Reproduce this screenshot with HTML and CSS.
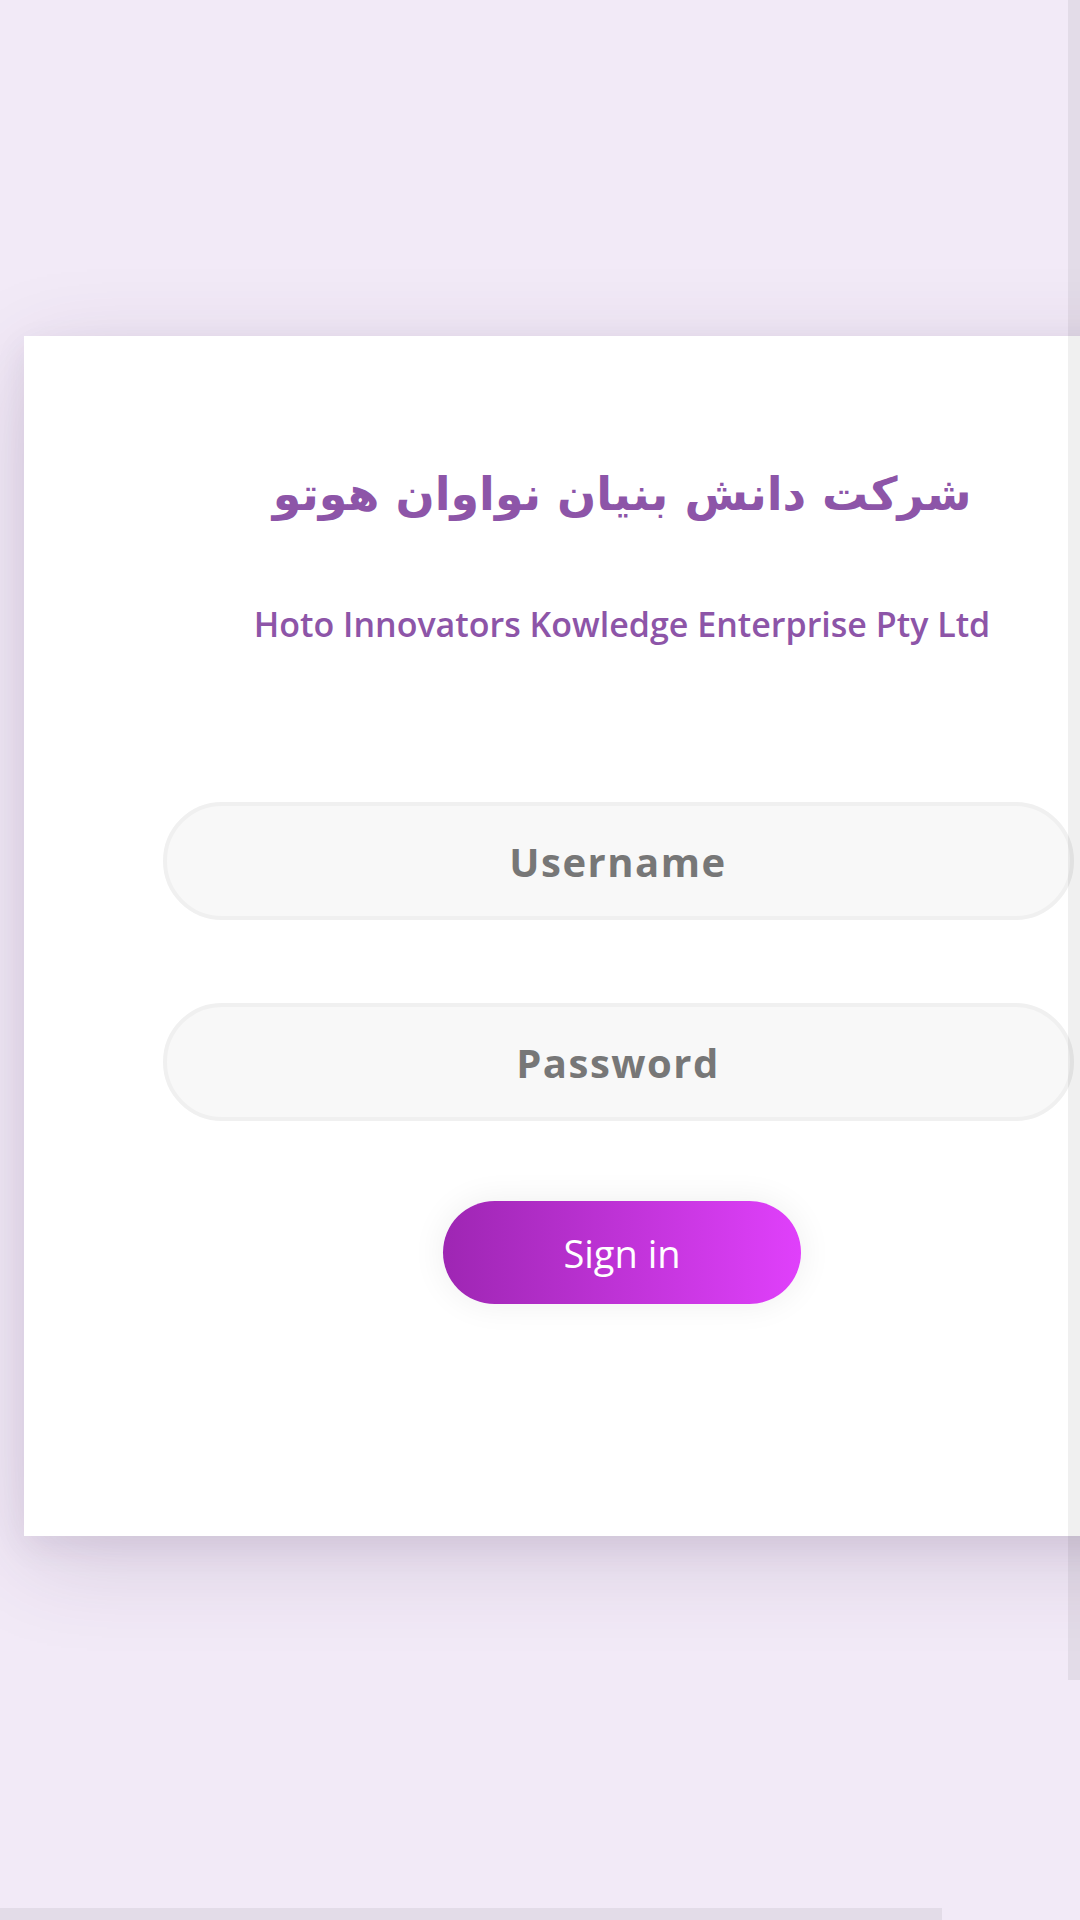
FILE: index.html
```html
<!DOCTYPE html>
<html lang="fa">
<head>
    <meta charset="UTF-8">
    <title>Sign in</title>
    <link rel="stylesheet" href="styles.css">
</head>
<body>
    <!-- 로그인 카드 -->
    <div class="container">
        <form class="signin" action="#">
            <h1 class="fa-title">شرکت دانش بنیان نواوان هوتو</h1>
            <h2 class="en-title">Hoto Innovators Kowledge Enterprise Pty Ltd</h2>

            <input class="field" type="text" placeholder="Username">
            <input class="field" type="password" placeholder="Password">

            <button class="btn" type="button">Sign in</button>
        </form>
    </div>

    <!-- 스크롤바 흔적 -->
    <div class="vbar"></div>
    <div class="hbar"></div>
</body>
</html>
```

FILE: styles.css
```css
html, body{
    margin: 0;
    height: 1920px;
    overflow: hidden;
}
body{
    position: relative;
    background-color: #f2eaf7;
    font-family: "Open Sans", "Noto Sans", sans-serif;
}

/* 카드 */
.container{
    margin: 336px 0 0 24px;
    width: 1196px;
    height: 1200px;
    background-color: #fff;
    box-shadow: 0 24px 90px rgba(70, 40, 90, 0.16),
                0 10px 30px rgba(70, 40, 90, 0.08);
}

.signin{
    display: flex;
    flex-direction: column;
    align-items: center;
    padding-top: 118px;
}

.fa-title{
    margin: 0;
    font-family: "DejaVu Sans", sans-serif;
    font-size: 46px;
    font-weight: bold;
    line-height: 80px;
    color: #8d55a8;
    direction: rtl;
}
.en-title{
    margin: 66px 0 0;
    font-size: 34px;
    font-weight: 600;
    line-height: 48px;
    color: #8d55a8;
}

/* 입력칸 */
.field{
    box-sizing: border-box;
    width: 911px;
    height: 118px;
    margin: 0 0 0 -8px;
    border: 4px solid #f0f0f0;
    border-radius: 60px;
    background-color: #f8f8f8;
    font-family: inherit;
    font-size: 40px;
    font-weight: bold;
    letter-spacing: 1.5px;
    text-align: center;
    color: #777;
    outline: none;
}
.field::placeholder{
    color: #777;
}
.field:first-of-type{
    margin-top: 154px;
}
.field + .field{
    margin-top: 83px;
}

/* 버튼 */
.btn{
    margin-top: 80px;
    width: 358px;
    height: 103px;
    border: none;
    border-radius: 52px;
    background: linear-gradient(to right, #9e26b3, #e040fb);
    box-shadow: 0 0 34px rgba(0, 0, 0, 0.07);
    font-family: inherit;
    font-size: 38px;
    color: #fff;
}

/* 스크롤바 */
.vbar{
    position: absolute;
    top: 0;
    right: 0;
    width: 12px;
    height: 1680px;
    background-color: rgba(0, 0, 0, 0.06);
}
.hbar{
    position: absolute;
    left: 0;
    bottom: 0;
    width: 942px;
    height: 12px;
    background-color: rgba(0, 0, 0, 0.06);
}
```
